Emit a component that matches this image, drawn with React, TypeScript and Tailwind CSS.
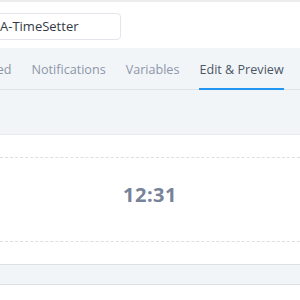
import React from 'react';

const tabs = ['Advanced', 'Notifications', 'Variables', 'Edit & Preview'];

const App: React.FC = () => {
  const active = 'Edit & Preview';

  return (
    <div className="w-[300px] h-[300px] overflow-hidden bg-white font-['Open_Sans',sans-serif]">
      <div className="h-[2px] bg-[#ececef]" />
      <div className="h-[46px] pt-[11px]">
        <div className="ml-[-60px] w-[181px] h-[27px] border border-[#e3e5ec] rounded-[4px] flex items-center pl-[59px] text-[13px] text-[#333a45]">
          A-TimeSetter
        </div>
      </div>

      <div className="h-[42px] bg-[#f2f5f8] border-b border-[#dfe3e8] flex items-end">
        <div className="flex gap-[20px] ml-[-46px]">
          {tabs.map(tab => (
            <div
              key={tab}
              className={`pb-[8px] text-[12.6px] whitespace-nowrap ${
                tab === active
                  ? 'text-[#4b5566] border-b-2 border-[#2196f3] mb-[-1px]'
                  : 'text-[#8c96a8] border-b-2 border-transparent mb-[-1px]'
              }`}
            >
              {tab}
            </div>
          ))}
        </div>
      </div>

      <div className="h-[45px] bg-[#f2f5f8] border-b border-[#e6e9ee]" />

      <div className="pt-[22px]">
        <div className="border-t border-dashed border-[#dcdfe4]" />
        <div className="h-[83px] flex justify-center pt-[23px]">
          <span className="text-[20px] leading-[28px] font-bold text-[#76839a] tracking-[0.5px]">12:31</span>
        </div>
        <div className="border-t border-dashed border-[#dcdfe4]" />
      </div>

      <div className="mt-[22px] h-[21px] bg-[#f2f5f8] border-y border-[#dcdfe3]" />
    </div>
  );
};

export default App;
